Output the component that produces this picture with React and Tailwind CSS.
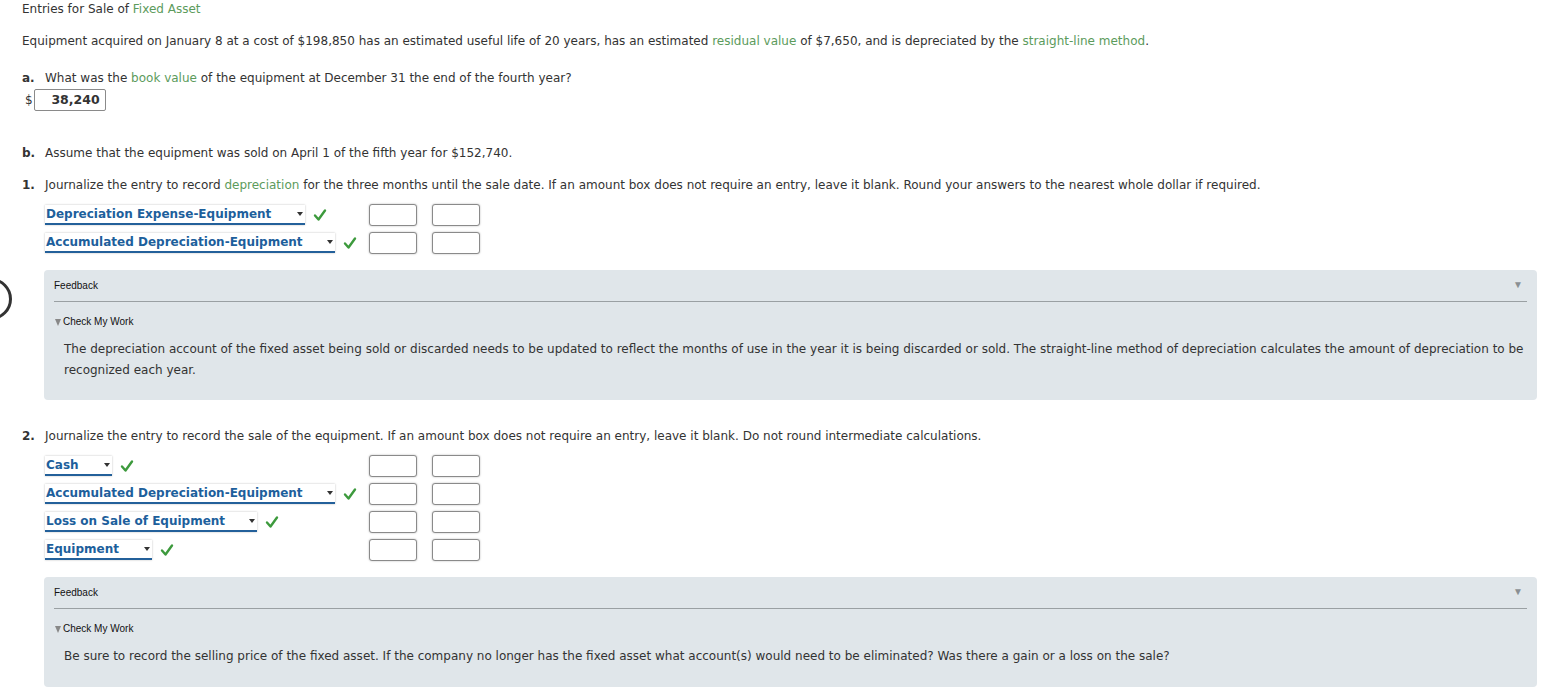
import React from "react";

const green = "text-[#5c9b5c]";

function Check() {
  return (
    <svg width="14" height="14" viewBox="0 0 14 14" className="shrink-0">
      <path d="M2 7.5 L5.5 11.5 L12 2.5" fill="none" stroke="#3d9a3d" strokeWidth="2.4" strokeLinecap="round" strokeLinejoin="round" />
    </svg>
  );
}

function Select({ label, width, checkGap = 8 }) {
  return (
    <div className="flex items-center">
      <div
        className="relative flex items-center h-[20px] border-b-2 border-[#23609a] shadow-[0_0_2px_rgba(0,0,0,0.25)] bg-white"
        style={{ width }}
      >
        <span className="font-bold text-[#1d5f9c] text-[12px] leading-[16px] pl-[1px]">{label}</span>
        <span className="absolute right-[2px] top-[7px] w-0 h-0 border-l-[3px] border-r-[3px] border-t-[4px] border-l-transparent border-r-transparent border-t-[#333]" />
      </div>
      <div style={{ marginLeft: checkGap }}>
        <Check />
      </div>
    </div>
  );
}

function Box() {
  return <div className="w-[48px] h-[22px] rounded-[3px] border border-[#8a8a8a] bg-white shadow-[0_0_2px_rgba(0,0,0,0.3)]" />;
}

function Row({ label, width }) {
  return (
    <div className="flex items-center h-[22px]">
      <div className="w-[324px] flex items-center">
        <Select label={label} width={width} />
      </div>
      <div className="flex gap-[15px]">
        <Box />
        <Box />
      </div>
    </div>
  );
}

function Feedback({ children, height }) {
  return (
    <div className="ml-[22px] mr-[6px] rounded-[4px] bg-[#e0e6ea] px-[10px] relative" style={{ height }}>
      <div className="pt-[10px] h-[32px] border-b border-[#9aa0a3] font-['Liberation_Sans',Arial,sans-serif] text-[10px] text-[#111] leading-[12px]">
        Feedback
      </div>
      <span className="absolute right-[14px] top-[7px] text-[10px] text-[#8a8f93] font-['Liberation_Sans',Arial,sans-serif]">▼</span>
      <div className="flex items-center mt-[14px] font-['Liberation_Sans',Arial,sans-serif] text-[10px] text-[#111] leading-[12px]">
        <span className="w-0 h-0 border-l-[3px] border-r-[3px] border-t-[7px] border-l-transparent border-r-transparent border-t-[#888] mr-[2px] ml-[1px]" />
        Check My Work
      </div>
      <div className="mt-[11px] pl-[10px] leading-[21px] text-[#333]">{children}</div>
    </div>
  );
}

export default function App() {
  return (
    <div className="relative bg-white w-[1543px] h-[695px] overflow-hidden font-['DejaVu_Sans',Verdana,sans-serif] text-[12px] text-[#333]">
      <div className="absolute left-[-30px] top-[278px] w-[42px] h-[42px] rounded-full border-[3px] border-[#333]" />
      <div className="pl-[22px] pt-[1px]">
        <div className="leading-[16px]">
          Entries for Sale of <span className={green}>Fixed Asset</span>
        </div>
        <div className="mt-[16px] leading-[16px]">
          Equipment acquired on January 8 at a cost of $198,850 has an estimated useful life of 20 years, has an estimated{" "}
          <span className={green}>residual value</span> of $7,650, and is depreciated by the{" "}
          <span className={green}>straight-line method</span>.
        </div>
        <div className="mt-[21px] leading-[16px] flex">
          <span className="w-[23px] font-bold">a.</span>
          <span>
            What was the <span className={green}>book value</span> of the equipment at December 31 the end of the fourth year?
          </span>
        </div>
        <div className="mt-[3px] flex items-center">
          <span className="ml-[3px] mr-[1px] text-[#333]">$</span>
          <div className="w-[72px] h-[22px] border border-[#8a8a8a] rounded-[2px] flex items-center justify-end pr-[5px] font-bold text-[12.5px]">
            38,240
          </div>
        </div>
        <div className="mt-[34px] leading-[16px] flex">
          <span className="w-[23px] font-bold">b.</span>
          <span>Assume that the equipment was sold on April 1 of the fifth year for $152,740.</span>
        </div>
        <div className="mt-[16px] leading-[16px] flex">
          <span className="w-[23px] font-bold">1.</span>
          <span>
            Journalize the entry to record <span className={green}>depreciation</span> for the three months until the sale date. If an amount box does not require an entry, leave it blank. Round your answers to the nearest whole dollar if required.
          </span>
        </div>
      </div>
      <div className="pl-[45px] mt-[11px] flex flex-col gap-[6px]">
        <Row label="Depreciation Expense-Equipment" width={260} />
        <Row label="Accumulated Depreciation-Equipment" width={290} />
      </div>
      <div className="mt-[16px] pl-[22px]">
        <Feedback height={130}>
          The depreciation account of the fixed asset being sold or discarded needs to be updated to reflect the months of use in the year it is being discarded or sold. The straight-line method of depreciation calculates the amount of depreciation to be recognized each year.
        </Feedback>
      </div>
      <div className="pl-[22px] mt-[28px] leading-[16px] flex">
        <span className="w-[23px] font-bold">2.</span>
        <span>
          Journalize the entry to record the sale of the equipment. If an amount box does not require an entry, leave it blank. Do not round intermediate calculations.
        </span>
      </div>
      <div className="pl-[45px] mt-[11px] flex flex-col gap-[6px]">
        <Row label="Cash" width={67} />
        <Row label="Accumulated Depreciation-Equipment" width={290} />
        <Row label="Loss on Sale of Equipment" width={212} />
        <Row label="Equipment" width={107} />
      </div>
      <div className="mt-[16px] pl-[22px]">
        <Feedback height={110}>
          Be sure to record the selling price of the fixed asset. If the company no longer has the fixed asset what account(s) would need to be eliminated? Was there a gain or a loss on the sale?
        </Feedback>
      </div>
    </div>
  );
}
